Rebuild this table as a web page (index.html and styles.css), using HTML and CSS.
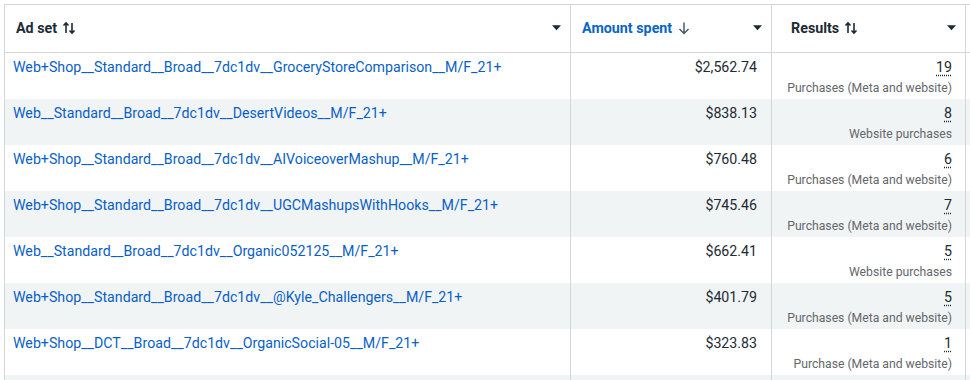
FILE: index.html
```html
<!DOCTYPE html>
<html>
<head>
<meta charset="utf-8">
<link rel="stylesheet" href="styles.css">
</head>
<body>
<div class="table">
  <div class="row head">
    <div class="cell c1">
      <span class="htext">Ad set <svg class="sort" viewBox="0 0 14 14" width="14" height="14"><path d="M4 12V2M1.5 4.5 4 2l2.5 2.5M10 2v10M7.5 9.5 10 12l2.5-2.5" fill="none" stroke="#1c2b33" stroke-width="1.6"/></svg></span>
      <svg class="caret" viewBox="0 0 10 6" width="9" height="6"><path d="M0 0h10L5 5.5z" fill="#1c2b33"/></svg>
    </div>
    <div class="cell c2">
      <span class="htext blue">Amount spent <svg class="sort down" viewBox="0 0 14 14" width="14" height="14"><path d="M7 1.5v11M2.5 8 7 12.5 11.5 8" fill="none" stroke="#465a69" stroke-width="1.5"/></svg></span>
      <svg class="caret" viewBox="0 0 10 6" width="9" height="6"><path d="M0 0h10L5 5.5z" fill="#1c2b33"/></svg>
    </div>
    <div class="cell c3">
      <span class="htext">Results <svg class="sort" viewBox="0 0 14 14" width="14" height="14"><path d="M4 12V2M1.5 4.5 4 2l2.5 2.5M10 2v10M7.5 9.5 10 12l2.5-2.5" fill="none" stroke="#1c2b33" stroke-width="1.6"/></svg></span>
      <svg class="caret" viewBox="0 0 10 6" width="9" height="6"><path d="M0 0h10L5 5.5z" fill="#1c2b33"/></svg>
    </div>
    <div class="cell c4"></div>
  </div>

  <div class="row">
    <div class="cell c1"><a class="link">Web+Shop__Standard__Broad__7dc1dv__GroceryStoreComparison__M/F_21+</a></div>
    <div class="cell c2 num">$2,562.74</div>
    <div class="cell c3 res"><span class="n">19</span><span class="sub">Purchases (Meta and website)</span></div>
    <div class="cell c4"></div>
  </div>
  <div class="row alt">
    <div class="cell c1"><a class="link">Web__Standard__Broad__7dc1dv__DesertVideos__M/F_21+</a></div>
    <div class="cell c2 num">$838.13</div>
    <div class="cell c3 res"><span class="n">8</span><span class="sub">Website purchases</span></div>
    <div class="cell c4"></div>
  </div>
  <div class="row">
    <div class="cell c1"><a class="link">Web+Shop__Standard__Broad__7dc1dv__AIVoiceoverMashup__M/F_21+</a></div>
    <div class="cell c2 num">$760.48</div>
    <div class="cell c3 res"><span class="n">6</span><span class="sub">Purchases (Meta and website)</span></div>
    <div class="cell c4"></div>
  </div>
  <div class="row alt">
    <div class="cell c1"><a class="link">Web+Shop__Standard__Broad__7dc1dv__UGCMashupsWithHooks__M/F_21+</a></div>
    <div class="cell c2 num">$745.46</div>
    <div class="cell c3 res"><span class="n">7</span><span class="sub">Purchases (Meta and website)</span></div>
    <div class="cell c4"></div>
  </div>
  <div class="row">
    <div class="cell c1"><a class="link">Web__Standard__Broad__7dc1dv__Organic052125__M/F_21+</a></div>
    <div class="cell c2 num">$662.41</div>
    <div class="cell c3 res"><span class="n">5</span><span class="sub">Website purchases</span></div>
    <div class="cell c4"></div>
  </div>
  <div class="row alt">
    <div class="cell c1"><a class="link">Web+Shop__Standard__Broad__7dc1dv__@Kyle_Challengers__M/F_21+</a></div>
    <div class="cell c2 num">$401.79</div>
    <div class="cell c3 res"><span class="n">5</span><span class="sub">Purchases (Meta and website)</span></div>
    <div class="cell c4"></div>
  </div>
  <div class="row">
    <div class="cell c1"><a class="link">Web+Shop__DCT__Broad__7dc1dv__OrganicSocial-05__M/F_21+</a></div>
    <div class="cell c2 num">$323.83</div>
    <div class="cell c3 res"><span class="n">1</span><span class="sub">Purchase (Meta and website)</span></div>
    <div class="cell c4"></div>
  </div>
  <div class="row alt">
    <div class="cell c1"></div>
    <div class="cell c2"></div>
    <div class="cell c3"></div>
    <div class="cell c4"></div>
  </div>
</div>
</body>
</html>
```

FILE: styles.css
```css
html, body {
  margin: 0;
  padding: 0;
  background: #ffffff;
}
body {
  font-family: Roboto, "Liberation Sans", sans-serif;
  color: #1c2b33;
  overflow: hidden;
  height: 380px;
}
.table {
  margin: 4px 0 0 4px;
  border-top: 1px solid #d4d7d9;
  border-left: 1px solid #d4d7d9;
}
.row {
  display: grid;
  grid-template-columns: 566px 201px 194px 10px;
  height: 46px;
}
.row.head {
  height: 47px;
  border-bottom: 1px solid #d4d7d9;
}
.row.alt {
  background: #f1f4f5;
}
.cell {
  border-right: 1px solid #d4d7d9;
  padding: 5px 14px 0 8px;
  font-size: 14.2px;
  line-height: 18px;
  min-width: 0;
  box-sizing: border-box;
}
.cell.c4 {
  border-right: none;
}
.head .cell {
  display: flex;
  align-items: center;
  justify-content: space-between;
  padding: 0 9px 2px 11px;
}
.head .c3 {
  padding-left: 19px;
}
.head .c4 {
  padding: 0;
}
.htext {
  font-weight: 700;
  font-size: 14.3px;
  display: inline-flex;
  align-items: center;
  gap: 5px;
  color: #1c2b33;
}
.htext.blue {
  color: #0a66c7;
}
.sort {
  display: block;
}
.caret {
  display: block;
}
.link {
  color: #0a5fc7;
  white-space: nowrap;
  text-decoration: none;
}
.num {
  text-align: right;
  color: #1c2b33;
}
.res {
  display: flex;
  flex-direction: column;
  align-items: flex-end;
  padding-right: 13px;
}
.n {
  color: #1c2b33;
  text-decoration: underline dotted #1c2b33;
  text-underline-offset: 3px;
}
.sub {
  font-size: 12.2px;
  line-height: 16px;
  color: #65676b;
  margin-top: 4px;
}
```
